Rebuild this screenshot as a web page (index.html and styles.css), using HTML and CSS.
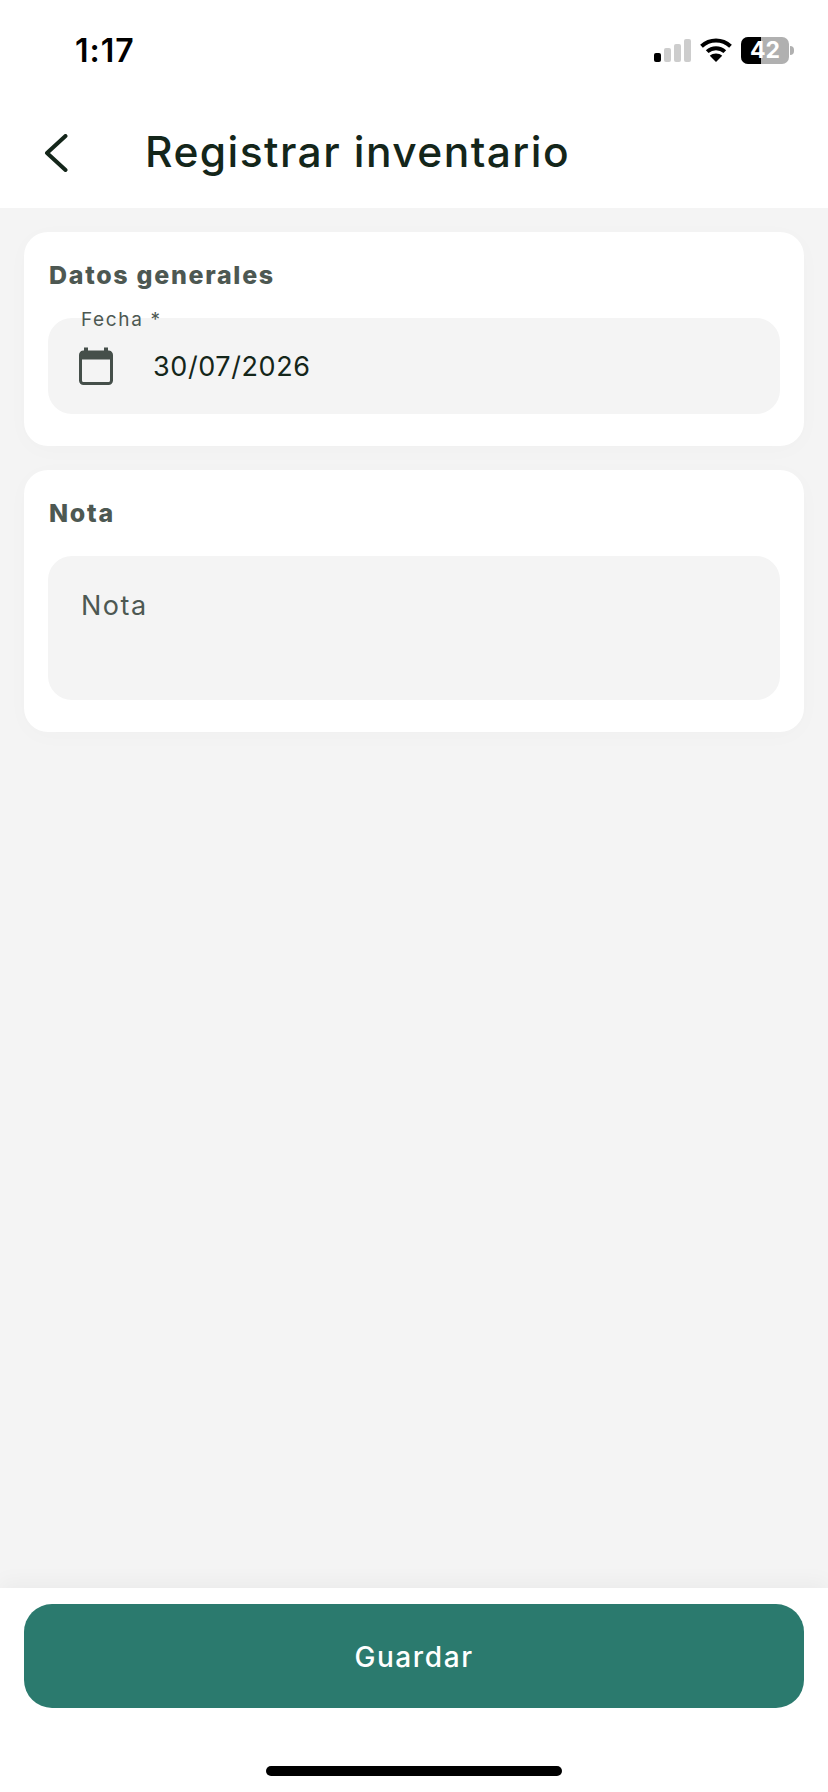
FILE: index.html
```html
<!DOCTYPE html>
<html lang="es">
<head>
    <meta charset="UTF-8">
    <meta name="viewport" content="width=device-width, initial-scale=1.0">
    <title>Registrar inventario</title>
    <link rel="stylesheet" href="styles.css">
</head>
<body>

<div class="screen">
    <div class="status-bar">
        <span class="status-time">1:17</span>
        <div class="status-icons">
            <div class="signal">
                <span class="bar bar-1"></span>
                <span class="bar bar-2"></span>
                <span class="bar bar-3"></span>
                <span class="bar bar-4"></span>
            </div>
            <svg class="wifi" viewBox="0 0 32 24" width="32" height="24">
                <path d="M1.5 8.2C9.8 .6 22.2 .6 30.5 8.2" fill="none" stroke="#000" stroke-width="4"/>
                <path d="M7.2 13.6C12.2 9 19.8 9 24.8 13.6" fill="none" stroke="#000" stroke-width="4"/>
                <path d="M16 24l-6.200-6.300C13.200 14.600 18.800 14.600 22.200 17.700z" fill="#000"/>
            </svg>
            <div class="battery">
                <div class="battery-body">
                    <div class="battery-level"></div>
                    <span class="battery-text">42</span>
                </div>
                <span class="battery-nub"></span>
            </div>
        </div>
    </div>

    <header class="app-header">
        <button class="back-button" aria-label="Volver">
            <svg viewBox="0 0 24 38" width="24" height="38">
                <path d="M21.500 2L3 19l18.500 17" fill="none" stroke="#14261a" stroke-width="4" stroke-linecap="round" stroke-linejoin="round"/>
            </svg>
        </button>
        <h1>Registrar inventario</h1>
    </header>

    <main class="content">
        <section class="card">
            <h2>Datos generales</h2>
            <div class="field field-date">
                <span class="float-label">Fecha *</span>
                <svg class="calendar-icon" viewBox="0 0 34 38" width="34" height="38">
                    <path d="M5 .5h4v5H5zM25 .5h4v5h-4z" fill="#454f4a"/>
                    <rect x="1.500" y="5" width="31" height="31.500" rx="3" fill="none" stroke="#454f4a" stroke-width="3"/>
                    <path d="M2 4h30v8.500H2z" fill="#454f4a"/>
                </svg>
                <span class="field-value">30/07/2026</span>
            </div>
        </section>

        <section class="card">
            <h2>Nota</h2>
            <div class="field field-note">
                <span class="placeholder">Nota</span>
            </div>
        </section>
    </main>

    <footer class="app-footer">
        <button class="save-button">Guardar</button>
        <div class="home-bar"></div>
    </footer>
</div>

</body>
</html>
```

FILE: styles.css
```css
:root {
    --page-bg: #f4f4f4;
    --white: #ffffff;
    --title-text: #14261a;
    --muted-text: #4d5852;
    --primary: #2b7a6e;
}
* {
    box-sizing: border-box;
}
body {
    margin: 0;
    padding: 0;
    background: var(--white);
    font-family: 'Inter', sans-serif;
}
.screen {
    display: flex;
    flex-direction: column;
    height: 100vh;
    overflow: hidden;
}
.status-bar {
    height: 100px;
    flex: none;
    display: flex;
    justify-content: space-between;
    align-items: center;
    padding: 0 34px 0 75px;
}
.status-time {
    font-size: 32px;
    font-weight: 600;
    letter-spacing: 1px;
    color: #000;
}
.status-icons {
    display: flex;
    align-items: center;
    gap: 9px;
}
.signal {
    display: flex;
    align-items: flex-end;
    gap: 3px;
    height: 23px;
}
.bar {
    width: 7px;
    border-radius: 2px;
    background: #cdcdcd;
}
.bar-1 {
    height: 9px;
    background: #000;
}
.bar-2 {
    height: 14px;
}
.bar-3 {
    height: 18px;
}
.bar-4 {
    height: 23px;
}
.battery {
    display: flex;
    align-items: center;
    gap: 1px;
}
.battery-body {
    position: relative;
    width: 48px;
    height: 27px;
    border-radius: 7px;
    background: #b0b0b0;
    overflow: hidden;
}
.battery-level {
    width: 42%;
    height: 100%;
    background: #000;
}
.battery-text {
    position: absolute;
    inset: 0;
    text-align: center;
    font-size: 23px;
    font-weight: 700;
    line-height: 27px;
    color: var(--white);
}
.battery-nub {
    width: 4px;
    height: 9px;
    border-radius: 0 4px 4px 0;
    background: #b0b0b0;
}
.app-header {
    height: 108px;
    flex: none;
    display: flex;
    align-items: flex-start;
    padding: 27px 0 0 44px;
}
.back-button {
    width: 101px;
    flex: none;
    padding: 7px 0 0;
    border: none;
    background: none;
    text-align: left;
}
h1 {
    margin: 0;
    font-size: 42.500px;
    font-weight: 500;
    line-height: 50px;
    letter-spacing: 1.430px;
    color: var(--title-text);
}
.content {
    flex: 1;
    display: flex;
    flex-direction: column;
    gap: 24px;
    padding: 24px 24px 0;
    background: var(--page-bg);
}
.card {
    padding: 28px 24px 32px;
    border-radius: 24px;
    background: var(--white);
    box-shadow: 0 4px 24px rgba(0, 0, 0, 0.02);
}
h2 {
    margin: 0 0 28px 1px;
    font-size: 25px;
    font-weight: 800;
    line-height: 30px;
    letter-spacing: 1.700px;
    color: var(--muted-text);
}
.field {
    border-radius: 24px;
    background: var(--page-bg);
}
.field-date {
    position: relative;
    height: 96px;
    display: flex;
    align-items: center;
    gap: 40px;
    padding-left: 31px;
}
.float-label {
    position: absolute;
    left: 33px;
    top: -10px;
    font-size: 19px;
    line-height: 24px;
    letter-spacing: 1.650px;
    color: var(--muted-text);
}
.calendar-icon {
    flex: none;
}
.field-value {
    font-size: 27px;
    letter-spacing: 0.600px;
    color: var(--title-text);
}
.field-note {
    height: 144px;
    padding: 34px 33px 0;
}
.placeholder {
    font-size: 27px;
    line-height: 32px;
    letter-spacing: 1.500px;
    color: var(--muted-text);
}
.app-footer {
    height: 204px;
    flex: none;
    display: flex;
    flex-direction: column;
    align-items: center;
    padding: 16px 24px 0;
    background: var(--white);
    box-shadow: 0 -6px 20px rgba(0, 0, 0, 0.04);
}
.save-button {
    width: 100%;
    height: 104px;
    flex: none;
    padding: 2px 0 0;
    border: none;
    border-radius: 28px;
    background: var(--primary);
    font-family: inherit;
    font-size: 28px;
    font-weight: 500;
    letter-spacing: 1.600px;
    color: var(--white);
}
.home-bar {
    width: 296px;
    height: 10px;
    margin-top: 58px;
    border-radius: 5px;
    background: #000;
}
```
